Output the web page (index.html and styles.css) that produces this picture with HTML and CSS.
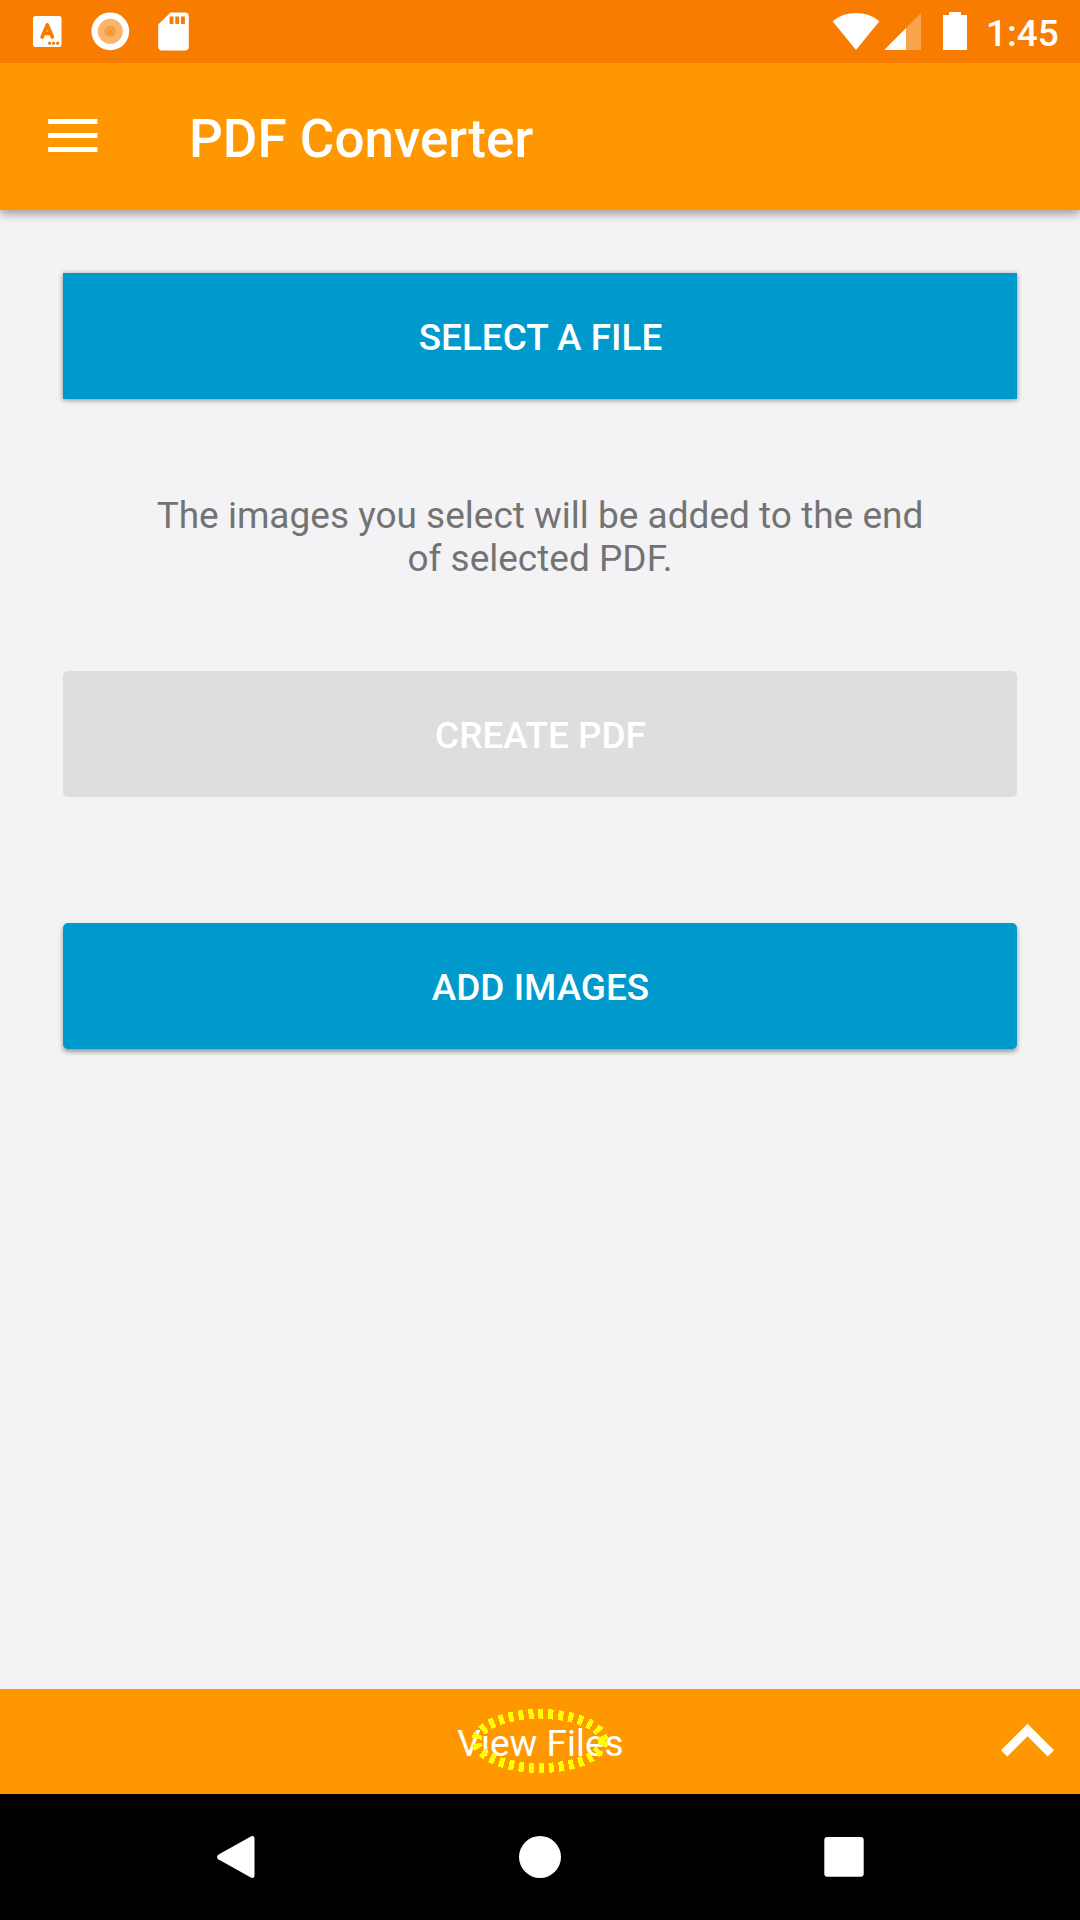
FILE: index.html
```html
<!DOCTYPE html>
<html lang="en">
<head>
<meta charset="utf-8">
<title>PDF Converter</title>
<link rel="stylesheet" href="styles.css">
</head>
<body>
<div class="screen">
  <div class="status-bar">
    <svg class="status-icons" width="200" height="63" viewBox="0 0 200 63">
      <rect x="33" y="16" width="28.5" height="31" rx="2.5" fill="#fff"/>
      <path d="M42.2 37 L47.3 25 L52.4 37 M44 33.4 H50.6" fill="none" stroke="#f77c00" stroke-width="3.7" stroke-linecap="round" stroke-linejoin="round"/>
      <g fill="#f77c00"><circle cx="49.6" cy="43.2" r="1.6"/><circle cx="53.6" cy="43.2" r="1.6"/><circle cx="57.7" cy="43.2" r="1.6"/></g>
      <circle cx="110.3" cy="31.3" r="18.9" fill="#fff"/>
      <circle cx="110.3" cy="31.3" r="12.5" fill="#fab46b"/>
      <circle cx="110.3" cy="31.3" r="5.7" fill="#f89d3f"/>
      <path d="M170.5 12.5 H185 Q188.8 12.5 188.8 16.3 V46.7 Q188.8 50.5 185 50.5 H162 Q158.2 50.5 158.2 46.7 V24.5 Z" fill="#fff"/>
      <path d="M169.6 16.6h3.9v7.4h-3.9z M175.3 16.6h3.9v7.4h-3.9z M181 16.6h3.9v7.4h-3.9z" fill="#f77c00"/>
    </svg>
    <div class="status-right">
      <svg width="140" height="63" viewBox="830 0 140 63">
        <path d="M856 50 L832.6 21.3 Q842.5 13 856 13 Q869.5 13 879.4 21.3 Z" fill="#fff"/>
        <path d="M921 13 V50 H884 Z" fill="#fff" fill-opacity=".3"/>
        <path d="M906 28.3 V50 H884.3 Z" fill="#fff"/>
        <path d="M949 12h12v3h6v35h-24V15h6z" fill="#fff"/>
      </svg>
      <span class="clock">1:45</span>
    </div>
  </div>
  <header class="app-bar">
    <svg class="menu-icon" width="50" height="34" viewBox="0 0 50 34">
      <path d="M0.2 0.1h49.3v4.9H0.2z M0.2 14h49.3v4.9H0.2z M0.2 28.1h49.3v5H0.2z" fill="#fff"/>
    </svg>
    <h1 class="title">PDF Converter</h1>
  </header>
  <main class="content">
    <button class="btn btn-square">SELECT A FILE</button>
    <p class="message">The images you select will be added to the end of selected PDF.</p>
    <button class="btn btn-disabled" disabled>CREATE PDF</button>
    <button class="btn btn-add">ADD IMAGES</button>
  </main>
  <footer class="sheet">
    <span class="sheet-label">View Files</span>
    <svg class="highlight" width="150" height="72" viewBox="466 1705 150 72">
      <ellipse cx="540" cy="1741" rx="63.5" ry="27" fill="none" stroke="#ff0" stroke-width="10" stroke-dasharray="5 5" shape-rendering="crispEdges"/>
    </svg>
    <svg class="chevron" width="54" height="34" viewBox="1001 1723 54 34">
      <path d="M1027.5 1723.7 L1054 1750.2 L1047.7 1756.5 L1027.5 1736.3 L1007.3 1756.5 L1001 1750.2 Z" fill="#fff"/>
    </svg>
  </footer>
  <nav class="nav-bar">
    <svg width="1080" height="126" viewBox="0 1794 1080 126" fill="#fff">
      <path d="M218.2 1854.7 L250.8 1836.5 Q254.5 1835 254.5 1839 V1875 Q254.5 1879 250.8 1877.5 L218.2 1859.3 Q215.8 1857 218.2 1854.7 Z"/>
      <circle cx="540" cy="1857" r="21"/>
      <rect x="824.3" y="1837" width="39.4" height="39.8" rx="3"/>
    </svg>
  </nav>
</div>
</body>
</html>
```
FILE: styles.css
```css
* { box-sizing: border-box; }
body {
  margin: 0;
  font-family: Roboto, "Liberation Sans", sans-serif;
  color: #fff;
}
svg { display: block; flex: none; }
.screen {
  width: 1080px;
  height: 1920px;
  display: flex;
  flex-direction: column;
  background: #f3f3f6;
  overflow: hidden;
}
.status-bar {
  z-index: 1;
  height: 63px;
  flex: none;
  display: flex;
  justify-content: space-between;
  background: #f77c00;
}
.status-right { display: flex; width: 250px; }
.clock {
  padding-left: 16px;
  font-size: 37px;
  font-weight: 500;
  line-height: 67px;
}
.app-bar {
  height: 147px;
  flex: none;
  display: flex;
  align-items: flex-start;
  padding-left: 48px;
  background: #ff9800;
  box-shadow: 0 4px 9px rgba(0, 0, 0, .36);
}
.menu-icon { margin-top: 56px; }
.title {
  margin: 45px 0 0 91px;
  font-size: 53px;
  font-weight: 500;
  line-height: 62px;
}
.content {
  flex: 1;
  display: flex;
  flex-direction: column;
  padding: 63px 63px 0;
}
.btn {
  height: 126px;
  padding: 2px 0 0 1px;
  border: 0;
  background: #0099cc;
  color: #fff;
  font-family: inherit;
  font-size: 36.9px;
  font-weight: 500;
}
.btn-square { box-shadow: 0 1px 5px rgba(0, 0, 0, .45); }
.message {
  margin: 95px 80px 91px;
  font-size: 37px;
  line-height: 43px;
  text-align: center;
  color: #737373;
}
.btn-disabled {
  border-radius: 5px;
  background: #dedede;
}
.btn-add {
  margin-top: 126px;
  border-radius: 5px;
  box-shadow: 0 3px 5px rgba(0, 0, 0, .38);
}
.sheet {
  position: relative;
  height: 105px;
  flex: none;
  display: flex;
  justify-content: center;
  background: #ff9800;
}
.sheet-label {
  padding: 33px 0 0 1px;
  font-size: 37px;
  line-height: 43px;
}
.highlight { position: absolute; left: 466px; top: 16px; }
.chevron { position: absolute; left: 1001px; top: 34px; }
.nav-bar { height: 126px; flex: none; background: #000; }
```
